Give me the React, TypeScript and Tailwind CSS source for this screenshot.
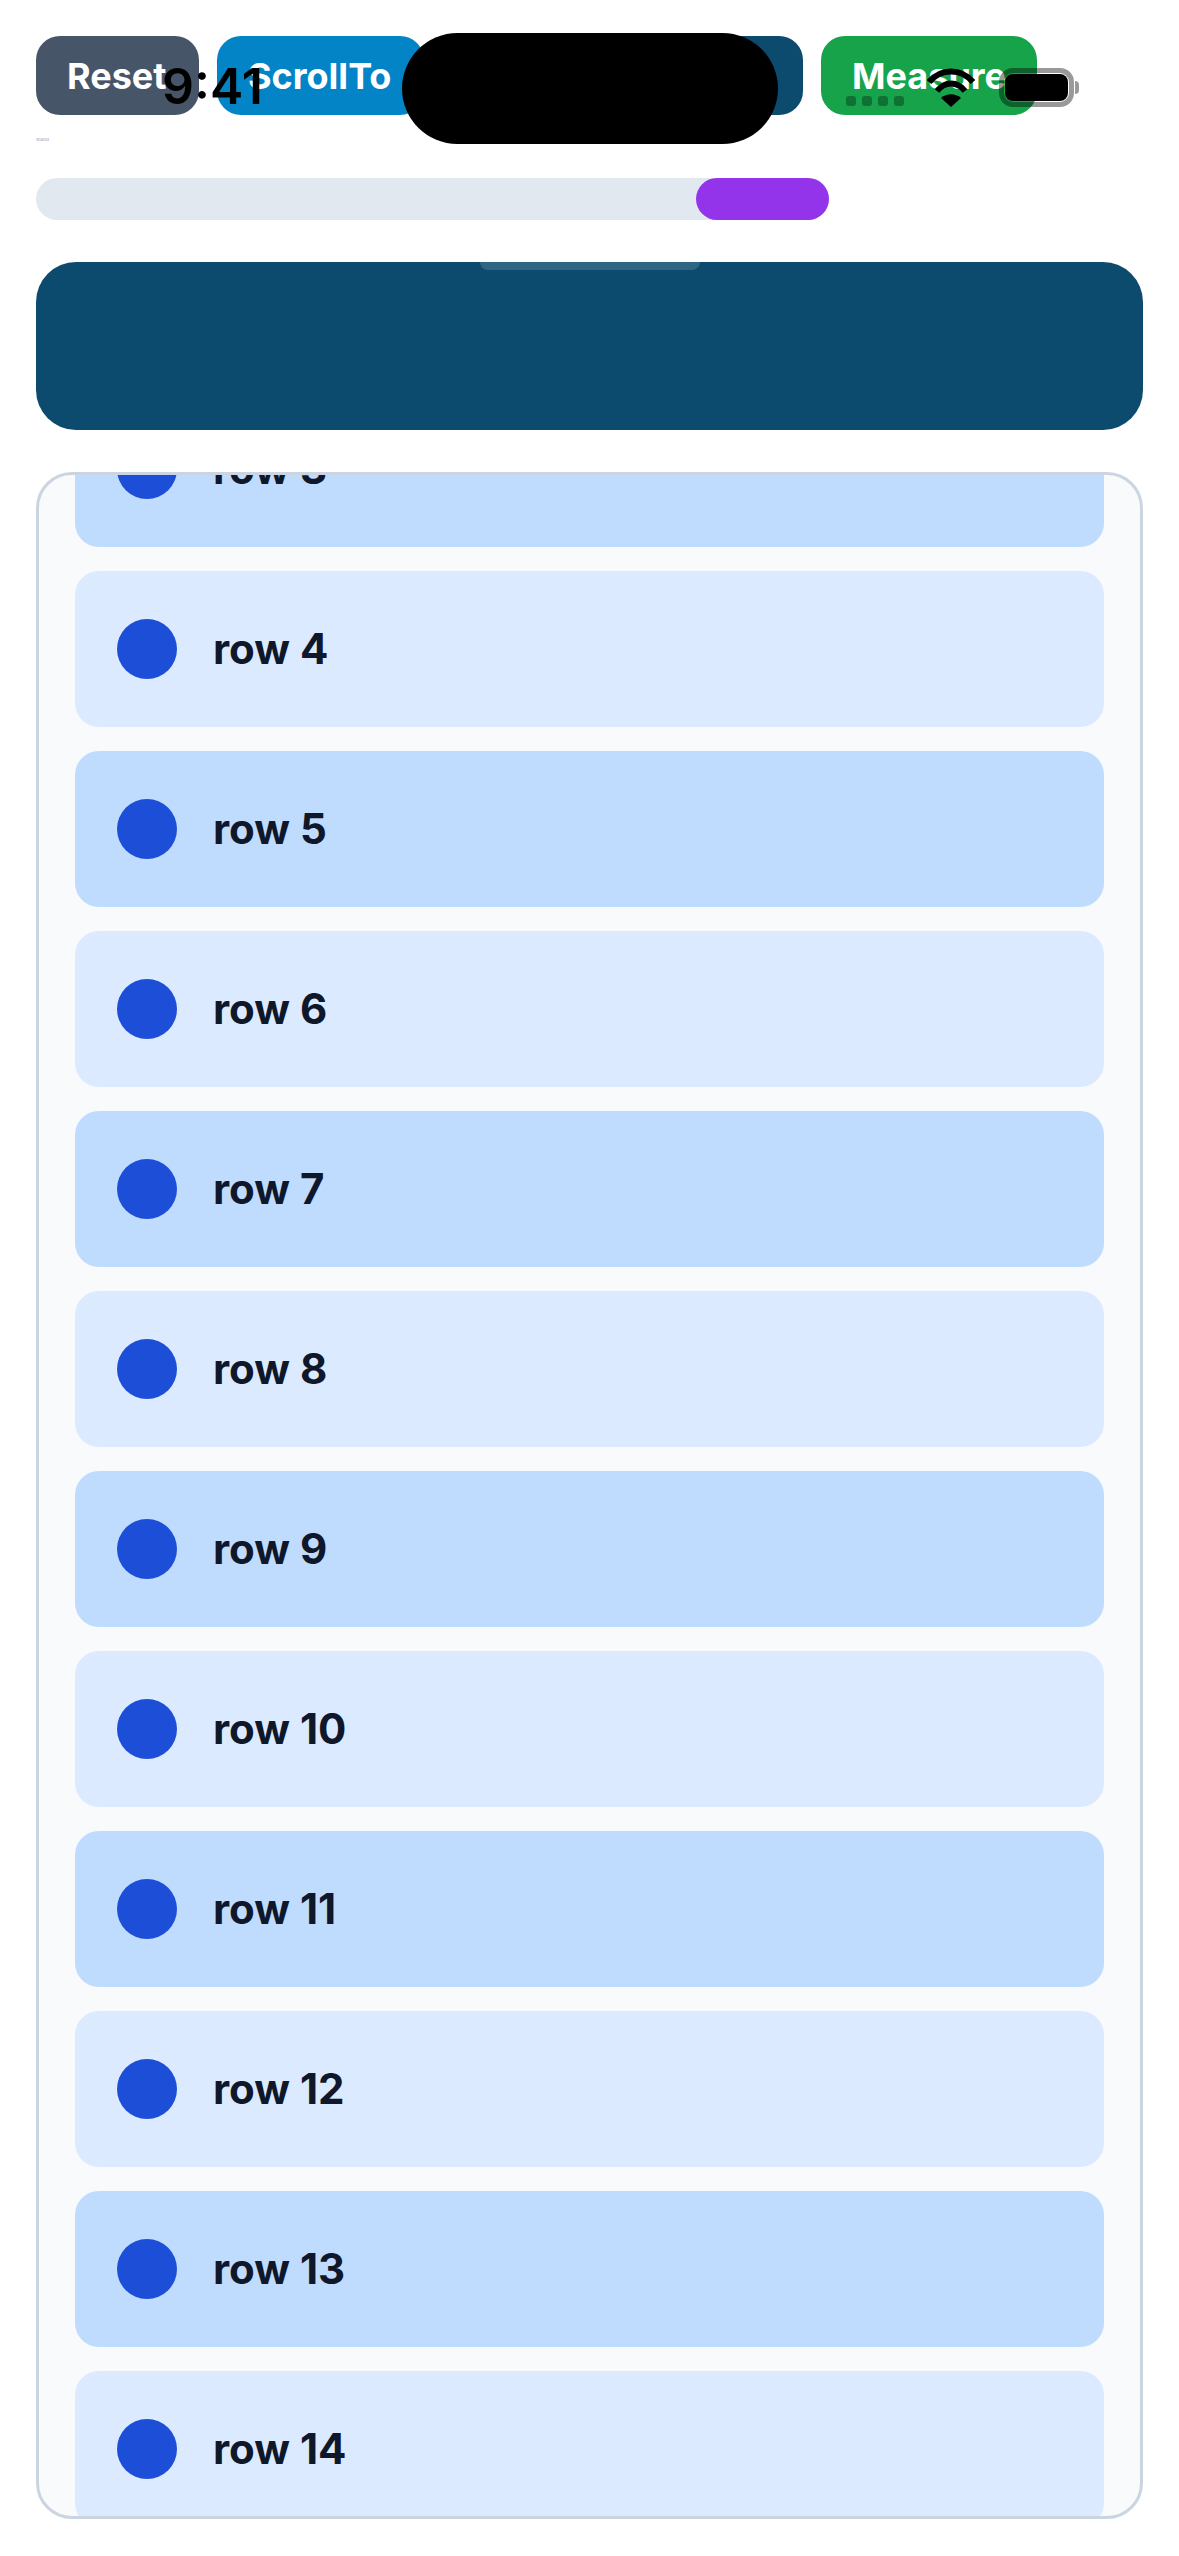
import React from 'react';

const rows = [3, 4, 5, 6, 7, 8, 9, 10, 11, 12, 13, 14];

const StatusBar: React.FC = () => (
  <div className="absolute left-0 top-0 h-[150px] w-full">
    <span className="absolute left-[162px] top-[56px] text-[50px] leading-[60px] font-semibold text-black">9:41</span>
    <div className="absolute left-[402px] top-[33px] h-[111px] w-[376px] rounded-full bg-black" />
    <div className="absolute left-[846px] top-[96px] flex gap-[6px]">
      <div className="h-[10px] w-[10px] rounded-[3px] bg-black/30" />
      <div className="h-[10px] w-[10px] rounded-[3px] bg-black/30" />
      <div className="h-[10px] w-[10px] rounded-[3px] bg-black/30" />
      <div className="h-[10px] w-[10px] rounded-[3px] bg-black/30" />
    </div>
    <svg className="absolute left-[926px] top-[68px]" width="50" height="39" viewBox="0 0 50 39" fill="none">
      <path d="M3 14C15 0 35 0 47 14" stroke="#000" strokeWidth="6" />
      <path d="M11 23C19 13 31 13 39 23" stroke="#000" strokeWidth="6" />
      <path d="M25 39L15 30C21 25 29 25 35 30Z" fill="#000" />
    </svg>
    <div className="absolute left-[999px] top-[68px] h-[39px] w-[75px] rounded-[14px] border-[5px] border-black/40 p-[1px]">
      <div className="h-full w-full rounded-[8px] bg-black" />
    </div>
    <div className="absolute left-[1075px] top-[81px] h-[13px] w-[4px] rounded-r-full bg-black/40" />
  </div>
);

export default function App() {
  return (
    <div className="relative h-[2556px] w-[1179px] overflow-hidden bg-white font-['Inter',sans-serif]">
      <div className="flex flex-col px-[36px] pt-[36px]">
        <div className="flex gap-[18px]">
          <button className="h-[79px] w-[163px] rounded-[24px] bg-[#475569] px-[31px] text-left text-[36px] font-bold whitespace-nowrap text-white">Reset</button>
          <button className="h-[79px] w-[207px] rounded-[24px] bg-[#0284c7] px-[31px] text-left text-[36px] font-bold whitespace-nowrap text-white">ScrollTo</button>
          <button className="h-[79px] w-[361px] rounded-[24px] bg-[#0c4a6e]" />
          <button className="h-[79px] w-[216px] rounded-[24px] bg-[#16a34a] px-[31px] text-left text-[36px] font-bold whitespace-nowrap text-white">Measure</button>
        </div>

        <p className="mt-[21px] h-[8px] text-[4px] leading-[8px] text-slate-400">shared</p>

        <div className="mt-[34px] flex h-[42px] w-[793px] justify-end rounded-[21px] bg-[#e2e8f0]">
          <div className="h-full w-[133px] rounded-[21px] bg-[#9333ea]" />
        </div>

        <div className="relative mt-[42px] h-[168px] w-[1107px] overflow-hidden rounded-[40px] bg-[#0c4a6e]">
          <div className="absolute left-[444px] top-0 h-[8px] w-[220px] rounded-b-[12px] bg-white/15" />
        </div>

        <div className="mt-[42px] h-[2047px] w-[1107px] overflow-hidden rounded-[36px] border-[3px] border-[#cbd5e1] bg-[#f8fafc]">
          <div className="-mt-[84px] flex flex-col gap-[24px] px-[36px]">
            {rows.map((n) => (
              <div
                key={n}
                className={`flex h-[156px] shrink-0 items-center gap-[36px] rounded-[24px] px-[42px] ${n % 2 === 0 ? 'bg-[#dbeafe]' : 'bg-[#bfdbfe]'}`}
              >
                <div className="h-[60px] w-[60px] rounded-full bg-[#1d4ed8]" />
                <span className="-mt-[2px] text-[42px] font-bold text-[#0f172a]">row {n}</span>
              </div>
            ))}
          </div>
        </div>
      </div>

      <StatusBar />
    </div>
  );
}
